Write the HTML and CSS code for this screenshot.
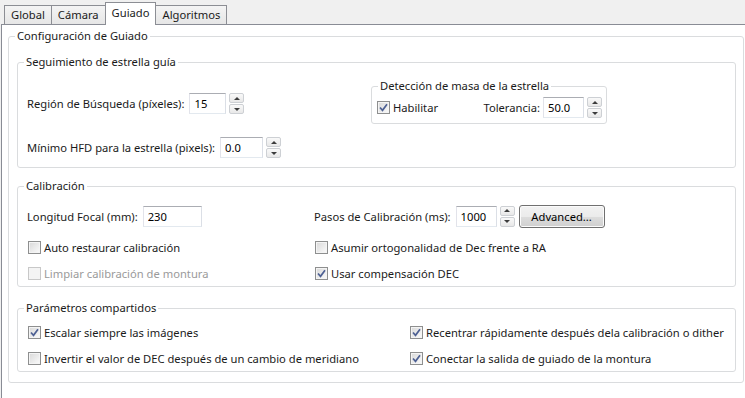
FILE: index.html
```html
<!DOCTYPE html>
<html lang="es">
<head>
    <meta charset="UTF-8">
    <meta name="viewport" content="width=device-width, initial-scale=1.0">
    <title>Guiado</title>
    <link rel="stylesheet" href="styles.css">
</head>
<body>
    <div class="tabs">
        <div class="tab first">Global</div>
        <div class="tab">Cámara</div>
        <div class="tab active">Guiado</div>
        <div class="tab">Algoritmos</div>
    </div>

    <div class="pane">
        <fieldset class="group outer">
            <legend>Configuración de Guiado</legend>
            <div class="outer-body">

                <fieldset class="group">
                    <legend>Seguimiento de estrella guía</legend>
                    <div class="track-body">
                        <div class="track-left">
                            <div class="field">
                                <label>Región de Búsqueda (píxeles):</label>
                                <input class="text w37" value="15">
                                <div class="spin"><span class="up"></span><span class="down"></span></div>
                            </div>
                            <div class="field second">
                                <label>Mínimo HFD para la estrella (pixels):</label>
                                <input class="text w43" value="0.0">
                                <div class="spin"><span class="up"></span><span class="down"></span></div>
                            </div>
                        </div>

                        <fieldset class="group mass">
                            <legend>Detección de masa de la estrella</legend>
                            <div class="mass-body">
                                <div class="check-row">
                                    <span class="check"><svg viewBox="0 0 11 11"><path d="M2 5.5 L4.5 8.3 L9 2.2"/></svg></span>
                                    <span>Habilitar</span>
                                </div>
                                <div class="field">
                                    <label class="tight">Tolerancia:</label>
                                    <input class="text w41" value="50.0">
                                    <div class="spin"><span class="up"></span><span class="down"></span></div>
                                </div>
                            </div>
                        </fieldset>
                    </div>
                </fieldset>

                <fieldset class="group calib">
                    <legend>Calibración</legend>
                    <div class="calib-body">
                        <div class="row r1">
                            <div class="col col-calib">
                                <div class="field">
                                    <label>Longitud Focal (mm):</label>
                                    <input class="text w59" value="230">
                                </div>
                            </div>
                            <div class="col">
                                <div class="field">
                                    <label>Pasos de Calibración (ms):</label>
                                    <input class="text w41" value="1000">
                                    <div class="spin"><span class="up"></span><span class="down"></span></div>
                                    <button class="btn">Advanced...</button>
                                </div>
                            </div>
                        </div>
                        <div class="row r2">
                            <div class="col col-calib check-row">
                                <span class="check"></span>
                                <span>Auto restaurar calibración</span>
                            </div>
                            <div class="col check-row">
                                <span class="check"></span>
                                <span>Asumir ortogonalidad de Dec frente a RA</span>
                            </div>
                        </div>
                        <div class="row r3">
                            <div class="col col-calib check-row disabled">
                                <span class="check"></span>
                                <span>Limpiar calibración de montura</span>
                            </div>
                            <div class="col check-row">
                                <span class="check"><svg viewBox="0 0 11 11"><path d="M2 5.5 L4.5 8.3 L9 2.2"/></svg></span>
                                <span>Usar compensación DEC</span>
                            </div>
                        </div>
                    </div>
                </fieldset>

                <fieldset class="group shared">
                    <legend>Parámetros compartidos</legend>
                    <div class="shared-body">
                        <div class="row">
                            <div class="col col-shared check-row">
                                <span class="check"><svg viewBox="0 0 11 11"><path d="M2 5.5 L4.5 8.3 L9 2.2"/></svg></span>
                                <span>Escalar siempre las imágenes</span>
                            </div>
                            <div class="col check-row">
                                <span class="check"><svg viewBox="0 0 11 11"><path d="M2 5.5 L4.5 8.3 L9 2.2"/></svg></span>
                                <span>Recentrar rápidamente después dela calibración o dither</span>
                            </div>
                        </div>
                        <div class="row r-next">
                            <div class="col col-shared check-row">
                                <span class="check"></span>
                                <span>Invertir el valor de DEC después de un cambio de meridiano</span>
                            </div>
                            <div class="col check-row">
                                <span class="check"><svg viewBox="0 0 11 11"><path d="M2 5.5 L4.5 8.3 L9 2.2"/></svg></span>
                                <span>Conectar la salida de guiado de la montura</span>
                            </div>
                        </div>
                    </div>
                </fieldset>

            </div>
        </fieldset>
    </div>
</body>
</html>
```

FILE: styles.css
```css
html, body { margin: 0; padding: 0; }
body { background: #f0f0f0; font-family: "Noto Sans", sans-serif; font-size: 11.2px; line-height: 15px; color: #1a1a1a; overflow: hidden; }

/* tab strip */
.tabs { display: flex; align-items: flex-end; height: 24px; padding-left: 4px; }
.tab { height: 19px; box-sizing: border-box; padding: 1px 6px 0; border: 1px solid #8c8e94; border-bottom: none; margin-left: -1px; background: linear-gradient(#f4f4f4, #e6e6e6); line-height: 16px; }
.tab.first { margin-left: 0; }
.tab.active { height: 23px; margin-bottom: -1px; padding-top: 2px; background: #fff; position: relative; z-index: 1; }

.pane { height: 374px; margin-left: 1px; background: #fff; border-top: 1px solid #898c95; border-left: 1px solid #898c95; box-sizing: border-box; }

/* group boxes */
.group { margin: 0; padding: 0; border: 1px solid #dadcde; border-radius: 3px; min-width: 0; }
.group legend { margin-left: 6px; padding: 0 2px; line-height: 16px; }
.outer { margin: 3px 1px 0 6px; }
.outer-body { padding: 10px 7px 10px 8px; }

.track-body { display: grid; grid-template-columns: 344px 236px; padding: 0 0 9px 9px; }
.track-left { padding-top: 23px; }
.field { display: flex; align-items: center; height: 21px; }
.field.second { margin-top: 23px; }
.field label { margin-right: 5px; }
.field label.tight { margin-right: 3px; }

.mass { margin-top: 8px; align-self: start; }
.mass-body { display: flex; justify-content: space-between; align-items: center; padding: 3px 4px 5px; }

.calib { margin-top: 10px; }
.calib-body { padding: 10px 0 3px 9px; }
.shared { margin-top: 13px; }
.shared-body { padding: 6px 0 3px 9px; }

.row { display: flex; align-items: center; height: 20px; }
.row.r1 { height: 24px; }
.row.r2 { margin-top: 9px; }
.row.r3 { margin-top: 6px; }
.row.r-next { margin-top: 6px; }
.col-calib { width: 287px; }
.col-shared { width: 382px; }

/* text inputs and spinners */
.text { box-sizing: border-box; height: 21px; padding: 0 4px; margin: 0; border: 1px solid; border-color: #abadb3 #dbdfe6 #e3e9ef #e2e3ea; font: inherit; color: #000; background: #fff; outline: none; }
.w37 { width: 37px; }
.w41 { width: 41px; }
.w43 { width: 43px; }
.w59 { width: 59px; }

.spin { display: flex; flex-direction: column; gap: 1px; width: 15px; height: 21px; margin-left: 3px; }
.spin span { flex: 1; box-sizing: border-box; border: 1px solid #cdd0d4; border-radius: 2px; background: linear-gradient(#f9f9f9, #e8e8e8); display: flex; align-items: center; justify-content: center; }
.spin .up::after { content: ""; border: 3px solid transparent; border-top: none; border-bottom: 3px solid #3c3c3c; }
.spin .down::after { content: ""; border: 3px solid transparent; border-bottom: none; border-top: 3px solid #3c3c3c; }

.btn { box-sizing: border-box; width: 86px; height: 23px; margin-left: 4px; padding: 0; border: 1px solid #707070; border-radius: 3px; background: linear-gradient(#f2f2f2 0%, #ebebeb 50%, #dddddd 51%, #cfcfcf 100%); box-shadow: inset 0 0 0 1px #fbfbfb; font: inherit; color: #000; }

/* checkboxes */
.check-row { display: flex; align-items: center; }
.check { box-sizing: border-box; width: 13px; height: 13px; margin: 0 3px 0 1px; border: 1px solid #8e8f8f; background: linear-gradient(135deg, #d8d8d8, #fbfbfb); box-shadow: inset 0 0 0 1px #f4f4f4; display: flex; }
.check svg { width: 11px; height: 11px; }
.check path { fill: none; stroke: #4d6093; stroke-width: 1.7; }
.disabled { color: #9a9a9a; }
.disabled .check { border-color: #c8c8c8; background: #f4f4f4; box-shadow: none; }
```
